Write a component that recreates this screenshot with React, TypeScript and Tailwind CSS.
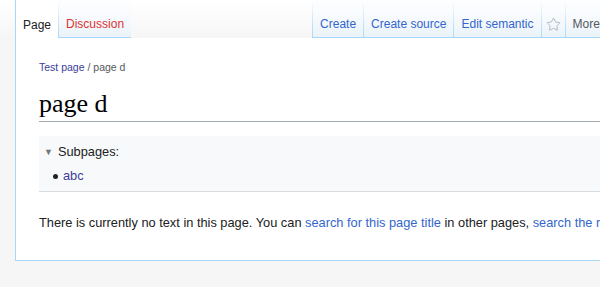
import { Star } from "lucide-react";

const sans = "font-['Liberation_Sans',Arial,sans-serif]";

function Tab({
  label,
  selected = false,
  className = "",
  first = false,
}: {
  label: React.ReactNode;
  selected?: boolean;
  className?: string;
  first?: boolean;
}) {
  return (
    <div className="flex h-[38px] shrink-0">
      <div
        className={
          first
            ? "w-px bg-[#a7d7f9]"
            : "w-px bg-linear-to-b from-[#a7d7f9]/0 to-[#a7d7f9]"
        }
      />
      <div
        className={
          "flex h-full items-end whitespace-nowrap pb-[6px] text-[12px] leading-[14px] " +
          (selected
            ? "bg-white text-[#202122] "
            : "border-b border-[#a7d7f9] bg-linear-to-b from-[#fdfeff]/60 via-[#f7fafd] to-[#eaf3f9] ") +
          className
        }
      >
        {label}
      </div>
    </div>
  );
}

export default function App() {
  return (
    <div className={`h-[287px] w-[600px] overflow-hidden bg-[#f6f6f6] ${sans}`}>
      <div className="flex h-[38px] bg-linear-to-b from-white to-[#f6f6f6] pl-[15px]">
        <Tab label="Page" selected first className="px-[7px]" />
        <Tab label="Discussion" className="px-[7px] text-[#dd3333]" />
        <div className="ml-[181px] flex shrink-0">
          <Tab label="Create" className="px-[7px] text-[#3366cc]" />
          <Tab label="Create source" className="px-[7px] text-[#3366cc]" />
          <Tab label="Edit semantic" className="px-[7px] text-[#3366cc]" />
          <Tab
            label={
              <Star
                size={15}
                strokeWidth={1.3}
                className="mb-[-1px] text-[#a2a9b1]"
              />
            }
            className="px-[4px]"
          />
          <Tab label="More" className="pl-[7px] pr-6 text-[#54595d]" />
        </div>
      </div>
      <div className="ml-[15px] w-[640px] border-b border-l border-[#a7d7f9] bg-white pt-[22px] pb-[27px] pl-[23px] text-[#202122]">
        <div className="text-[10.5px] leading-[14px] text-[#54595d]">
          <span className="text-[#3d3d99]">Test page</span> / page d
        </div>
        <h1 className="mt-[13px] border-b border-[#a2a9b1] font-['Liberation_Serif','Times_New_Roman',serif] text-[26px] leading-[34px] text-[#000]">
          page d
        </h1>
        <div className="mt-[14px] border-b border-[#d8dbdf] bg-[#f8f9fa] pt-[6px] pb-[5px] pl-[5px] text-[12.8px] leading-[20px]">
          <div className="flex items-center">
            <span className="mr-[5px] text-[9px] text-[#72777d]">▼</span>
            <span>Subpages:</span>
          </div>
          <ul className="mt-[4px] pl-[9px]">
            <li className="flex items-center">
              <span className="mr-[5px] inline-block h-[5px] w-[5px] rounded-full bg-[#202122]" />
              <span className="text-[#3d3d99]">abc</span>
            </li>
          </ul>
        </div>
        <p className="mt-[21px] whitespace-nowrap text-[12.8px] leading-[20px]">
          There is currently no text in this page. You can{" "}
          <span className="text-[#3366cc]">search for this page title</span> in
          other pages, <span className="text-[#3366cc]">search the related logs</span>
        </p>
      </div>
    </div>
  );
}
